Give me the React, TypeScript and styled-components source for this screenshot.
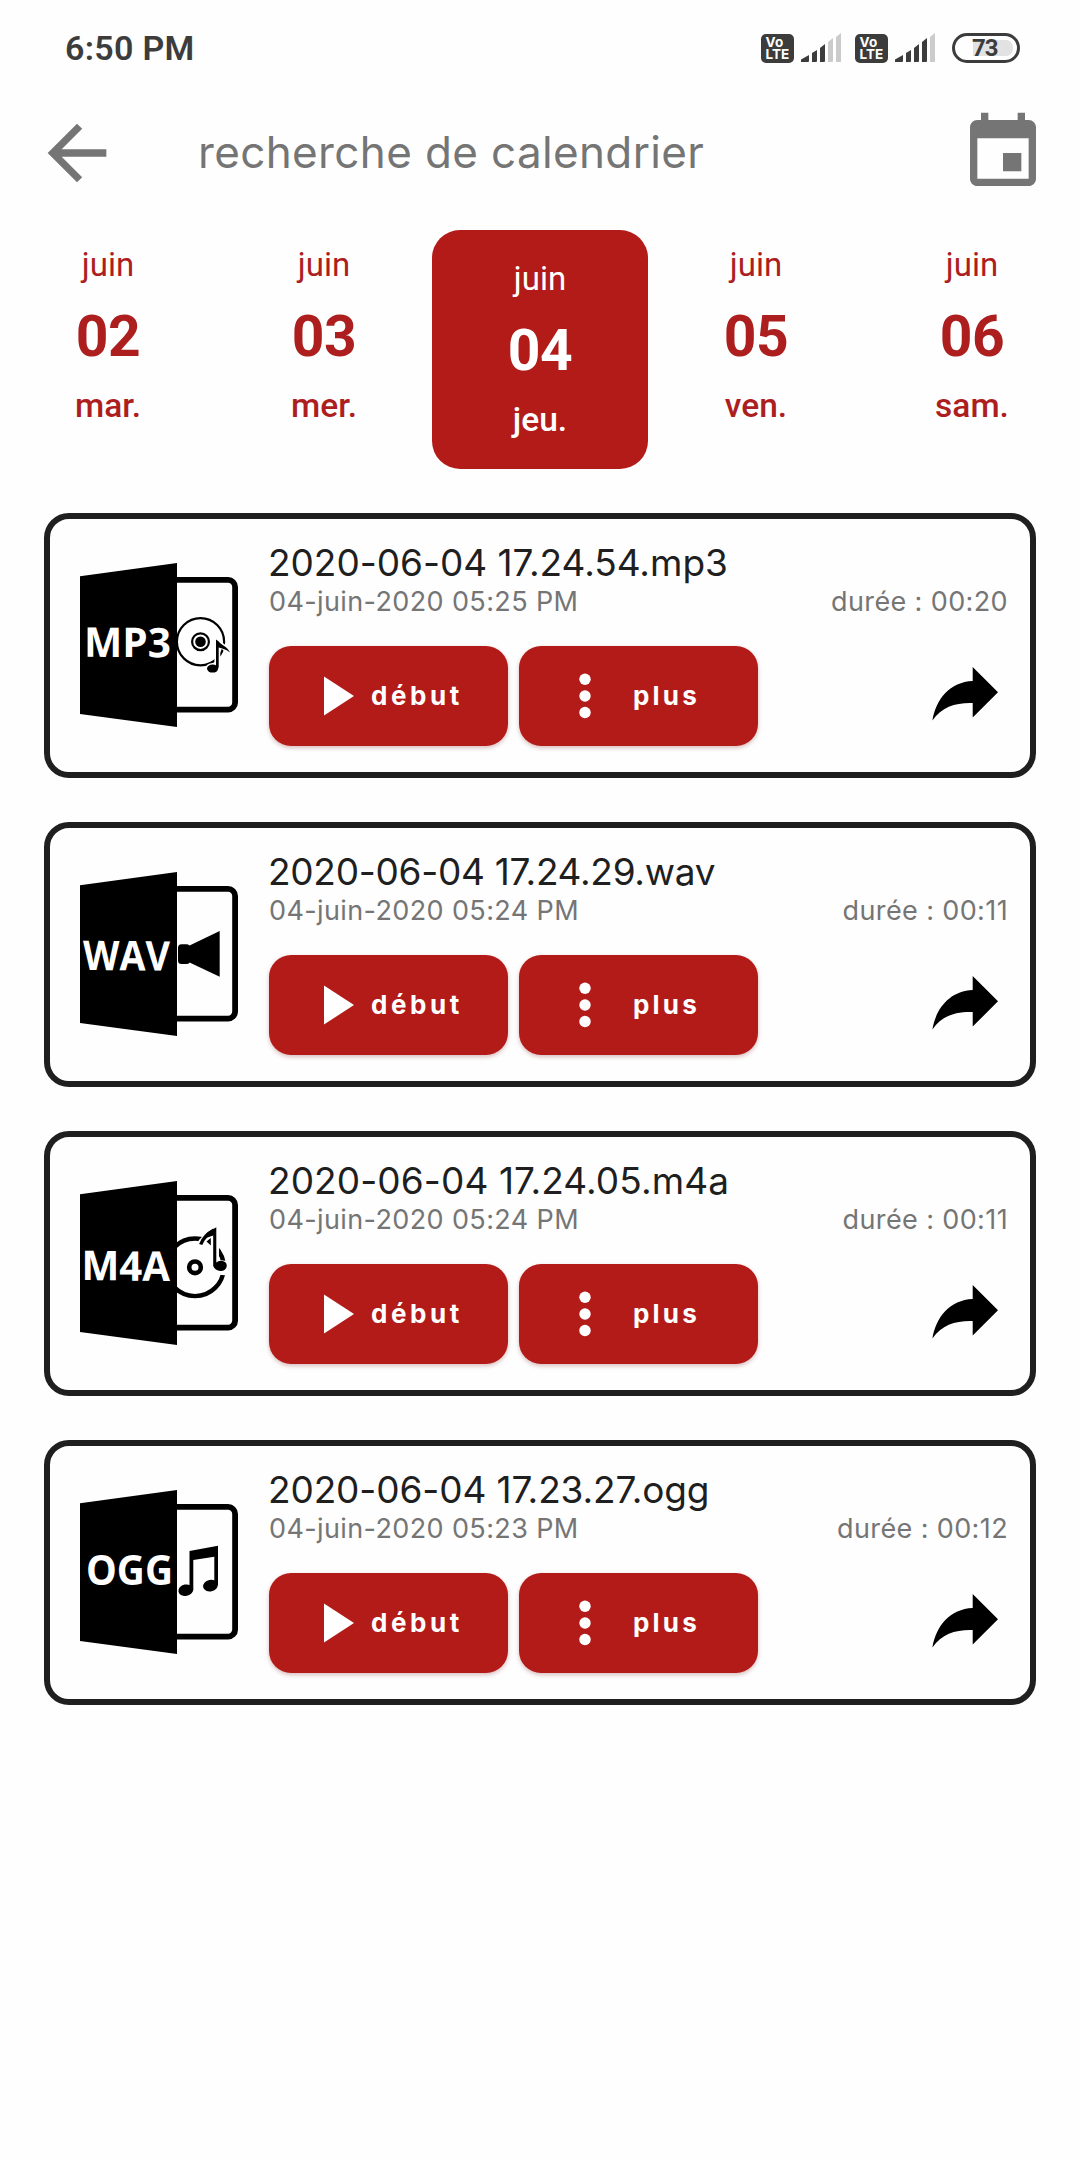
import React from 'react';
import styled, { createGlobalStyle } from 'styled-components';

const RED = '#b31b19';
const INK = '#1f1f1f';
const GREY = '#757575';
const STATUS = '#3c3c3c';

const GlobalStyle = createGlobalStyle`
  *, *::before, *::after { box-sizing: border-box; }
  body { margin: 0; background: #fefefe; }
  svg { display: block; flex: none; }
`;

const Screen = styled.main`
  width: 1080px;
  min-height: 2160px;
  background: #fefefe;
  font-family: Inter, Roboto, "Liberation Sans", sans-serif;
  color: ${INK};
`;

/* ---------- status bar ---------- */

const StatusBar = styled.div`
  height: 96px;
  display: flex;
  align-items: center;
  justify-content: space-between;
  padding: 0 60px 0 65px;
  font-family: Roboto, "Liberation Sans", sans-serif;
  color: ${STATUS};
`;

const Clock = styled.span`
  font-size: 34px;
  font-weight: 600;
  line-height: 40px;
  letter-spacing: 0.3px;
`;

const Indicators = styled.div`
  display: flex;
  align-items: center;
`;

const VolteBadge = styled.div`
  width: 33px;
  height: 29px;
  border-radius: 5px;
  background: ${STATUS};
  color: #fff;
  display: flex;
  flex-direction: column;
  justify-content: center;
  padding-left: 4.5px;
  margin-right: 7px;
  font-family: Inter, sans-serif;
  font-weight: 700;
`;

const VolteLine = styled.span<{ $track: number }>`
  font-size: 13.5px;
  line-height: 12.5px;
  letter-spacing: ${({ $track }) => $track}px;
`;

const SignalGap = styled.div<{ $after: number }>`
  margin-right: ${({ $after }) => $after}px;
`;

const Battery = styled.div`
  width: 68px;
  height: 30px;
  padding: 3px 6px 3px 18px;
  border: 3px solid ${STATUS};
  border-radius: 15px;
`;

const BatteryCharge = styled.div`
  width: 40px;
  height: 16px;
  margin-top: 1px;
  background: #e2e2e2;
  border-radius: 0 7px 7px 0;
  font: 700 24px/17px Roboto, sans-serif;
  letter-spacing: -1px;
  text-indent: -1px;
`;

/* ---------- header ---------- */

const Header = styled.header`
  height: 134px;
  display: flex;
  align-items: flex-start;
  padding: 13px 33px 0 33px;
  color: ${GREY};
`;

const SearchHint = styled.div`
  flex: 1;
  padding-left: 77px;
  font-size: 44px;
  line-height: 87px;
  letter-spacing: 0.36px;
`;

/* ---------- day strip ---------- */

const DayStrip = styled.nav`
  display: grid;
  grid-template-columns: repeat(5, 1fr);
  height: 239px;
`;

const Day = styled.div<{ $active: boolean }>`
  display: flex;
  flex-direction: column;
  align-items: center;
  padding-top: ${({ $active }) => ($active ? 29 : 15)}px;
  border-radius: 28px;
  background: ${({ $active }) => ($active ? RED : 'transparent')};
  color: ${({ $active }) => ($active ? '#fff' : '#ad1f1f')};
  font-family: Roboto, "Liberation Sans", sans-serif;
`;

const Month = styled.span`
  font-size: 33px;
  line-height: 40px;
`;

const DayNumber = styled.span`
  margin: 18px 0 15px;
  font-size: 57px;
  font-weight: 700;
  line-height: 68px;
  letter-spacing: -0.4px;
`;

const Weekday = styled.span`
  font-size: 33.5px;
  font-weight: 500;
  line-height: 40px;
`;

/* ---------- recordings ---------- */

const List = styled.section`
  display: flex;
  flex-direction: column;
  gap: 44px;
  padding: 44px 44px 0;
`;

const Card = styled.article`
  height: 265px;
  display: flex;
  border: 6px solid ${INK};
  border-radius: 25px;
  background: #fefefe;
`;

const Thumb = styled.div`
  width: 219px;
  padding: 38px 0 0 24px;
`;

const Info = styled.div`
  flex: 1;
  display: flex;
  flex-direction: column;
  padding: 23px 22px 0 0;
`;

const FileName = styled.h2<{ $track: number }>`
  margin: 0 0 0 -1px;
  font-size: 37px;
  font-weight: 400;
  line-height: 41px;
  letter-spacing: ${({ $track }) => $track}px;
  white-space: nowrap;
`;

const Meta = styled.div`
  display: flex;
  justify-content: space-between;
  margin-top: 3px;
  color: ${GREY};
  font-size: 27px;
  line-height: 32px;
  letter-spacing: 0.38px;
`;

const Actions = styled.div`
  display: flex;
  gap: 11px;
  margin-top: 28px;
`;

const ActionButton = styled.button<{ $gap: number; $inset: number; $track: number }>`
  width: 239px;
  height: 100px;
  display: flex;
  align-items: center;
  gap: ${({ $gap }) => $gap}px;
  padding: 0 0 0 ${({ $inset }) => $inset}px;
  border: 0;
  border-radius: 22px;
  background: ${RED};
  box-shadow: 0 2px 4px rgba(120, 20, 20, 0.28);
  color: #fff;
  font: 700 26px/32px Inter, sans-serif;
  letter-spacing: ${({ $track }) => $track}px;
`;

const ShareSlot = styled.div`
  margin: 20px 9px 0 auto;
`;

/* ---------- drawings ---------- */

const Signal = ({ level }: { level: number }) => (
  <svg width="41" height="30" viewBox="0 0 41 30">
    {['M0 29V26.5L8 22V28Q8 29 7 29Z', 'M11 29V20L16 17V28Q16 29 15 29Z', 'M19 29V15L24 11V28Q24 29 23 29Z', 'M27 29V9L32 5V28Q32 29 31 29Z', 'M35 29V4L40 0V29Z'].map((d, i) => (
      <path key={d} d={d} fill={i < level ? STATUS : '#cbcbcb'} />
    ))}
  </svg>
);

const BackIcon = () => (
  <svg width="88" height="88" viewBox="0 0 24 24" fill={GREY}>
    <path d="M20 11H7.83l5.59-5.59L12 4l-8 8 8 8 1.41-1.41L7.83 13H20v-2z" />
  </svg>
);

const CalendarIcon = () => (
  <svg width="88" height="88" viewBox="0 0 24 24" fill={GREY}>
    <path d="M17 12h-5v5h5v-5zM16 1v2H8V1H6v2H5c-1.11 0-1.99.9-1.99 2L3 19c0 1.1.89 2 2 2h14c1.1 0 2-.9 2-2V5c0-1.1-.9-2-2-2h-1V1h-2zm3 18H5V8h14v11z" />
  </svg>
);

const PlayIcon = () => (
  <svg width="31" height="40" viewBox="0 0 31 40" fill="#fff">
    <path d="M0 0.5L30 20L0 39.5Z" />
  </svg>
);

const DotsIcon = () => (
  <svg width="12" height="46" viewBox="0 0 12 46" fill="#fff">
    <circle cx="6" cy="6.3" r="5.7" />
    <circle cx="6" cy="23" r="5.7" />
    <circle cx="6" cy="39.5" r="5.7" />
  </svg>
);

const ShareIcon = () => (
  <svg width="68" height="56" viewBox="931 666 68 56" fill="#000">
    <path d="M932.4 720.5C936 699 950 682 972.7 681V667L998 692.3L972.7 717.6V703C956 702.5 942 706.5 932.4 720.5Z" />
  </svg>
);

const Mp3Art = () => (
  <>
    <circle cx="200.5" cy="641.7" r="23.6" fill="#fff" stroke="#000" strokeWidth="2.2" />
    <circle cx="200.5" cy="641.7" r="8.4" fill="none" stroke="#000" strokeWidth="2.2" />
    <circle cx="200.5" cy="641.7" r="5.3" />
    <g stroke="#fff" strokeWidth="3.2">
      <path d="M216 640L218.5 641.2C221 645 227 646 230 652.4C226.5 649.5 222 648.7 218.7 648V667H216Z" />
      <ellipse cx="212.6" cy="668.6" rx="5.7" ry="4.1" />
    </g>
    <path d="M216 639.5L218.5 641.2C221 645 227 646 230 652.4C226.5 649.5 222 648.3 218.7 647.5V667.5L216 669Z" />
    <ellipse cx="212.6" cy="668.6" rx="5.6" ry="4" />
    <path d="M221.2 649.2L223.5 650L221.5 653.8Z" />
  </>
);

const WavArt = () => (
  <>
    <rect x="178" y="635.3" width="12" height="19.8" rx="3.5" />
    <path d="M188.5 637L219.7 622V667.7L188.5 653Z" />
  </>
);

const M4aArt = () => (
  <>
    <circle cx="195" cy="649.3" r="28.8" fill="none" stroke="#000" strokeWidth="4.4" />
    <circle cx="195" cy="649.3" r="5.8" fill="none" stroke="#000" strokeWidth="4.6" />
    <path d="M216 604L198.5 622.5L201.5 629L211 634V656L227.5 657.5V643L219 642V604Z" fill="#fff" />
    <path d="M214 612Q204 617.500 200.700 626.500" fill="none" stroke="#000" strokeWidth="3.4" />
    <path d="M216.300 609.300V644.500Q218 642.800 221 642.800Q226.800 643.300 226.800 648Q226 653 220.500 653Q215 652.500 213.200 648V617.500L203 621L207 615Z" />
    <path d="M206.500 623.500L210.800 620V627.500Z" />
    <path d="M219.400 630.500L224.500 642L219.400 638.500Z" />
  </>
);

const OggArt = () => (
  <>
    <path d="M189.500 624L218 618.700V658H214.300V629.700L193.300 633V663H189.500Z" />
    <ellipse cx="185.800" cy="663.200" rx="7.500" ry="5.700" transform="rotate(-12 185.8 663.2)" />
    <ellipse cx="210.500" cy="658.600" rx="7.500" ry="5.700" transform="rotate(-12 210.5 658.6)" />
  </>
);

type Format = { label: string; x: number; baseline: number; width: number; skew: number; art: React.ReactNode };

const FileIcon = ({ label, x, baseline, width, skew, art }: Format) => (
  <svg width="166" height="170" viewBox="74 557 166 170">
    <path d="M176 579.900H228A7 7 0 0 1 235.100 587V702.500A7 7 0 0 1 228 709.600H176" fill="none" stroke="#000" strokeWidth="5.800" />
    {art}
    <path d="M80 576.300L177 563V727L80 714Z" />
    <text
      x="0"
      y="0"
      transform={`translate(${x} ${baseline}) skewY(${skew})`}
      textLength={width}
      lengthAdjust="spacingAndGlyphs"
      fill="#fff"
      fontFamily='"Open Sans", "Noto Sans", sans-serif'
      fontWeight="700"
      fontSize="41"
    >
      {label}
    </text>
  </svg>
);

/* ---------- data ---------- */

const days = [
  { number: '02', weekday: 'mar.' },
  { number: '03', weekday: 'mer.' },
  { number: '04', weekday: 'jeu.', active: true },
  { number: '05', weekday: 'ven.' },
  { number: '06', weekday: 'sam.' },
];

const recordings = [
  {
    name: '2020-06-04 17.24.54.mp3', date: '04-juin-2020 05:25 PM', length: '00:20', track: -0.02,
    icon: { label: 'MP3', x: 84, baseline: 656.8, width: 87, skew: 0.4, art: <Mp3Art /> },
  },
  {
    name: '2020-06-04 17.24.29.wav', date: '04-juin-2020 05:24 PM', length: '00:11', track: -0.28,
    icon: { label: 'WAV', x: 83, baseline: 661, width: 87, skew: 0.4, art: <WavArt /> },
  },
  {
    name: '2020-06-04 17.24.05.m4a', date: '04-juin-2020 05:24 PM', length: '00:11', track: 0.1,
    icon: { label: 'M4A', x: 81.5, baseline: 662, width: 88.5, skew: 0.6, art: <M4aArt /> },
  },
  {
    name: '2020-06-04 17.23.27.ogg', date: '04-juin-2020 05:23 PM', length: '00:12', track: -0.12,
    icon: { label: 'OGG', x: 86, baseline: 657.8, width: 87, skew: 0, art: <OggArt /> },
  },
];

const Volte = () => (
  <VolteBadge>
    <VolteLine $track={0.3}>Vo</VolteLine>
    <VolteLine $track={0.1}>LTE</VolteLine>
  </VolteBadge>
);

export default function App() {
  return (
    <Screen>
      <GlobalStyle />
      <StatusBar>
        <Clock>6:50 PM</Clock>
        <Indicators>
          <Volte />
          <SignalGap $after={13}><Signal level={3} /></SignalGap>
          <Volte />
          <SignalGap $after={16}><Signal level={4} /></SignalGap>
          <Battery><BatteryCharge>73</BatteryCharge></Battery>
        </Indicators>
      </StatusBar>
      <Header>
        <BackIcon />
        <SearchHint>recherche de calendrier</SearchHint>
        <CalendarIcon />
      </Header>
      <DayStrip>
        {days.map((d) => (
          <Day key={d.number} $active={!!d.active}>
            <Month>juin</Month>
            <DayNumber>{d.number}</DayNumber>
            <Weekday>{d.weekday}</Weekday>
          </Day>
        ))}
      </DayStrip>
      <List>
        {recordings.map((r) => (
          <Card key={r.name}>
            <Thumb><FileIcon {...r.icon} /></Thumb>
            <Info>
              <FileName $track={r.track}>{r.name}</FileName>
              <Meta>
                <span>{r.date}</span>
                <span>durée : {r.length}</span>
              </Meta>
              <Actions>
                <ActionButton $inset={55} $gap={16} $track={3.6}><PlayIcon />début</ActionButton>
                <ActionButton $inset={60} $gap={42} $track={3.2}><DotsIcon />plus</ActionButton>
                <ShareSlot><ShareIcon /></ShareSlot>
              </Actions>
            </Info>
          </Card>
        ))}
      </List>
    </Screen>
  );
}
